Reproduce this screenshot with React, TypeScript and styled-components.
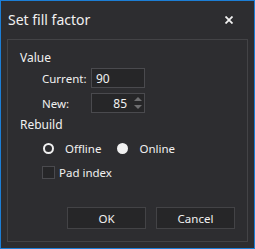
import { FunctionComponent } from "react";
import styled, { createGlobalStyle } from "styled-components";

const GlobalStyle = createGlobalStyle`
    body {
        margin: 0;
        background: #2d2d30;
        font-family: "Noto Sans", "Open Sans", sans-serif;
    }
`;

const Window = styled.div`
    box-sizing: border-box;
    width: 255px;
    height: 249px;
    border: 1px solid #1c7ed6;
    background: #2d2d30;
    color: #f1f1f1;
    display: flex;
    flex-direction: column;
    padding: 0 6px 6px 6px;
`;

const TitleBar = styled.div`
    display: flex;
    align-items: center;
    justify-content: space-between;
    height: 38px;
    padding-left: 1px;
    padding-right: 15px;
`;

const Title = styled.div`
    font-size: 14px;
    margin-top: -1px;
`;

const CloseButton = styled.div`
    display: flex;
    cursor: pointer;
`;

const Panel = styled.div`
    flex: 1;
    border: 1px solid #434346;
    display: flex;
    flex-direction: column;
    padding: 10px 12px 12px 12px;
    font-size: 11px;
`;

const SectionLabel = styled.div<{ $top?: number }>`
    line-height: 16px;
    height: 16px;
    font-size: 12px;
    margin-top: ${(p) => p.$top ?? 0}px;
`;

const FieldRow = styled.div<{ $top: number }>`
    display: flex;
    align-items: center;
    margin-top: ${(p) => p.$top}px;
    padding-left: 22px;
    font-size: 12px;
`;

const FieldLabel = styled.div`
    width: 49px;
    font-size: 11.5px;
`;

const InputBox = styled.div<{ $align: string }>`
    box-sizing: border-box;
    width: 54px;
    height: 20px;
    border: 1px solid #4a4a4e;
    background: #262628;
    display: flex;
    align-items: center;
    justify-content: ${(p) => p.$align};
    padding: 0 2px 0 4px;
    gap: 7px;
`;

const Spinner = styled.div`
    display: flex;
    flex-direction: column;
    gap: 4px;
`;

const RadioRow = styled.div`
    display: flex;
    align-items: center;
    margin-top: 6px;
    padding-left: 23px;
    height: 18px;
    font-size: 11.5px;
`;

const RadioDot = styled.div<{ $checked: boolean }>`
    box-sizing: border-box;
    width: 11px;
    height: 11px;
    border-radius: 50%;
    border: 2px solid #f1f1f1;
    background: ${(p) => (p.$checked ? "#f1f1f1" : "#2d2d30")};
    margin-right: 11px;
`;

const RadioText = styled.div`
    margin-right: 16px;
`;

const CheckRow = styled.div`
    display: flex;
    align-items: center;
    margin-top: 8px;
    padding-left: 22px;
    font-size: 11.5px;
`;

const CheckBox = styled.div`
    box-sizing: border-box;
    width: 13px;
    height: 13px;
    border: 1px solid #4a4a4e;
    background: #262628;
    margin-right: 4px;
`;

const ButtonRow = styled.div`
    margin-top: auto;
    display: flex;
    justify-content: flex-end;
    gap: 10px;
    font-size: 11.5px;
`;

const Button = styled.div`
    box-sizing: border-box;
    width: 79px;
    height: 22px;
    border: 1px solid #434346;
    background: #262628;
    display: flex;
    align-items: center;
    justify-content: center;
`;

const App: FunctionComponent = () => {
    return (
        <>
            <GlobalStyle />
            <Window>
                <TitleBar>
                    <Title>Set fill factor</Title>
                    <CloseButton>
                        <svg width="8" height="8" viewBox="0 0 8 8">
                            <path d="M0.5 0.5 L7.5 7.5 M7.5 0.5 L0.5 7.5" stroke="#f1f1f1" strokeWidth="1.8" />
                        </svg>
                    </CloseButton>
                </TitleBar>
                <Panel>
                    <SectionLabel>Value</SectionLabel>
                    <FieldRow $top={2}>
                        <FieldLabel>Current:</FieldLabel>
                        <InputBox $align="flex-start">90</InputBox>
                    </FieldRow>
                    <FieldRow $top={5}>
                        <FieldLabel>New:</FieldLabel>
                        <InputBox $align="flex-end">
                            85
                            <Spinner>
                                <svg width="8" height="4" viewBox="0 0 8 4">
                                    <path d="M0 4 L4 0 L8 4 Z" fill="#6e6e70" />
                                </svg>
                                <svg width="8" height="4" viewBox="0 0 8 4">
                                    <path d="M0 0 L4 4 L8 0 Z" fill="#6e6e70" />
                                </svg>
                            </Spinner>
                        </InputBox>
                    </FieldRow>
                    <SectionLabel $top={4}>Rebuild</SectionLabel>
                    <RadioRow>
                        <RadioDot $checked={false} />
                        <RadioText>Offline</RadioText>
                        <RadioDot $checked={true} />
                        <RadioText>Online</RadioText>
                    </RadioRow>
                    <CheckRow>
                        <CheckBox />
                        Pad index
                    </CheckRow>
                    <ButtonRow>
                        <Button>OK</Button>
                        <Button>Cancel</Button>
                    </ButtonRow>
                </Panel>
            </Window>
        </>
    );
};

export default App;
